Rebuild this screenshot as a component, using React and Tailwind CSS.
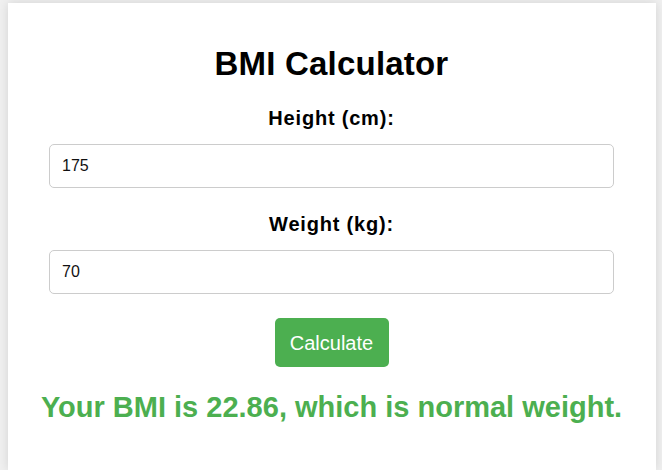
import { useState } from "react";

export default function App() {
    const [height, setHeight] = useState("175");
    const [weight, setWeight] = useState("70");
    const [result, setResult] = useState("Your BMI is 22.86, which is normal weight.");

    const calculate = () => {
        const h = parseFloat(height) / 100;
        const w = parseFloat(weight);
        if (!h || !w) return setResult("Please enter valid values.");
        const bmi = w / (h * h);
        let label = "normal weight";
        if (bmi < 18.5) label = "underweight";
        else if (bmi >= 25 && bmi < 30) label = "overweight";
        else if (bmi >= 30) label = "obese";
        setResult(`Your BMI is ${bmi.toFixed(2)}, which is ${label}.`);
    };

    return (
        <div className="min-h-screen bg-[#f0f0f0] pt-[3px] pl-[8px] pr-[6px] font-['Liberation_Sans',Arial,sans-serif]">
            <div className="bg-white shadow-[0_0_10px_rgba(0,0,0,0.12)] pl-[41px] pr-[42px] pt-[42px] pb-[46px] text-center">
                <h1 className="text-[33px] font-bold leading-[37px] tracking-[0.2px] text-black">BMI Calculator</h1>

                {/* HEIGHT */}
                <label className="block mt-[25px] text-[20px] font-bold leading-[23px] tracking-[0.8px] text-black">Height (cm):</label>
                <input
                    type="text"
                    className="block w-full h-[44px] mt-[14px] px-[12px] border border-[#ccc] rounded-[5px] text-[16px] text-[#111] outline-none"
                    value={height}
                    onChange={e => setHeight(e.target.value)}
                />

                {/* WEIGHT */}
                <label className="block mt-[25px] text-[20px] font-bold leading-[23px] tracking-[0.8px] text-black">Weight (kg):</label>
                <input
                    type="text"
                    className="block w-full h-[44px] mt-[14px] px-[12px] border border-[#ccc] rounded-[5px] text-[16px] text-[#111] outline-none"
                    value={weight}
                    onChange={e => setWeight(e.target.value)}
                />

                <button
                    onClick={calculate}
                    className="mt-[24px] w-[114px] h-[49px] bg-[#4CAF50] text-white text-[20px] rounded-[5px]"
                >
                    Calculate
                </button>

                {/* RESULT */}
                <p className="-mx-[20px] mt-[23px] whitespace-nowrap text-[29px] font-bold leading-[34px] text-[#4CAF50]">{result}</p>
            </div>
        </div>
    );
}
